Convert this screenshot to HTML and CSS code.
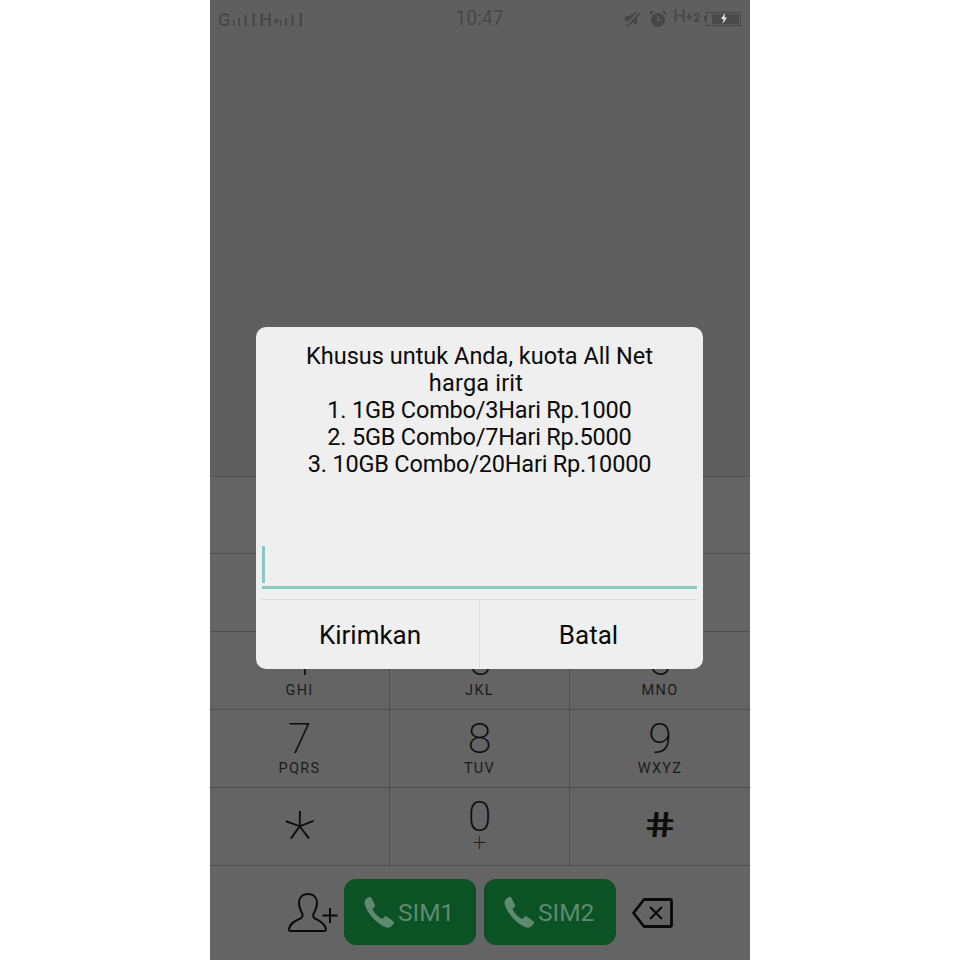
FILE: index.html
```html
<!DOCTYPE html>
<html lang="id">
<head>
<meta charset="utf-8">
<title>Dialer</title>
<link rel="stylesheet" href="styles.css">
</head>
<body>
<div class="phone">
  <div class="status">
    <div class="status-left">
      <span class="net">G</span>
      <svg class="bars first" width="24" height="14" viewBox="0 0 24 14"><rect x="1" y="7" width="1.500" height="6"/><rect x="6" y="5" width="2" height="8"/><rect x="12.500" y="2" width="2" height="11"/><rect x="20.500" y="0" width="2.500" height="13"/></svg>
      <span class="net net-h">H</span><span class="net-plus">+</span>
      <svg class="bars second" width="24" height="14" viewBox="0 0 24 14"><rect x="1" y="7" width="1.500" height="6"/><rect x="6" y="5" width="2" height="8"/><rect x="12.500" y="2" width="2" height="11"/><rect x="20.500" y="0" width="2.500" height="13"/></svg>
    </div>
    <div class="time">10:47</div>
    <div class="status-right">
      <svg width="18" height="17" viewBox="0 0 18 17"><path d="M2 6h4l8-5v14l-8-4H2z" fill="#474747"/><path d="M1 17L17 1" stroke="#5f5f5f" stroke-width="2"/><path d="M4 17L17 3" stroke="#474747" stroke-width="1.600"/></svg>
      <svg class="alarm" width="18" height="18" viewBox="0 0 18 18"><circle cx="9" cy="10" r="7" fill="#474747"/><path d="M9 6v4.500h3.500" stroke="#666" stroke-width="1.200" fill="none"/><path d="M1 4l3-3M17 4l-3-3" stroke="#474747" stroke-width="2"/></svg>
      <span class="hplus"><span class="hplus-h">H</span><span class="hplus-n">+2</span></span>
      <span class="batt-tip"></span>
      <span class="battery"><span class="batt-fill"><svg width="8" height="11" viewBox="0 0 8 11"><path d="M5 0L1 6h2.500L2.500 11 7 4.500H4.500z" fill="#e8e8e8"/></svg></span></span>
    </div>
  </div>
  <div class="blank"></div>
  <div class="keypad">
    <div class="entry"></div>
    <div class="key"><span class="digit">1</span><span class="letters">&nbsp;</span></div>
    <div class="key"><span class="digit">2</span><span class="letters">ABC</span></div>
    <div class="key"><span class="digit">3</span><span class="letters">DEF</span></div>
    <div class="key"><span class="digit">4</span><span class="letters">GHI</span></div>
    <div class="key"><span class="digit">5</span><span class="letters">JKL</span></div>
    <div class="key"><span class="digit">6</span><span class="letters">MNO</span></div>
    <div class="key"><span class="digit">7</span><span class="letters">PQRS</span></div>
    <div class="key"><span class="digit">8</span><span class="letters">TUV</span></div>
    <div class="key"><span class="digit">9</span><span class="letters">WXYZ</span></div>
    <div class="key"><span class="digit symbol">*</span></div>
    <div class="key"><span class="digit">0</span><span class="letters plus">+</span></div>
    <div class="key"><span class="digit hash">#</span></div>
  </div>
  <div class="actions">
    <svg class="add" width="50" height="40" viewBox="0 0 50 40">
      <path d="M20 2C14 2 11 6 11 11 11 15 12.500 18 14 21 15 23 14.500 25.500 12.500 26.500 8 28.500 2 31 1 37 .8 38.500 1.500 39 3 39H36C37.500 39 38 38.500 37.800 37 37 31 31 28.500 27 26.500 25 25.500 24.500 23 26 21 27.500 18 29 15 29 11 29 6 26 2 20 2Z" fill="none" stroke="#0a0a0a" stroke-width="2"/>
      <path d="M42 16v15M34.500 23.500h15" stroke="#0a0a0a" stroke-width="2"/>
    </svg>
    <div class="sim">
      <svg width="32" height="32" viewBox="0 0 32 32"><path d="M3 3L6 1C7 .5 8 1 8.500 2L12 9C12.300 10 12 11 11 11.500L9.500 12.500C11 17 15 21 19.500 23L21 21C21.800 20.200 22.800 20 23.800 20.600L30.500 25.500C31.300 26.200 31.300 27.300 30.500 28L28 30.500C26.500 32 24 32 22 31 13 27 4.500 17.500 2 9 1.300 6.500 1.500 4.500 3 3Z" fill="#5f8a70"/></svg>
      <span>SIM1</span>
    </div>
    <div class="sim">
      <svg width="32" height="32" viewBox="0 0 32 32"><path d="M3 3L6 1C7 .5 8 1 8.500 2L12 9C12.300 10 12 11 11 11.500L9.500 12.500C11 17 15 21 19.500 23L21 21C21.800 20.200 22.800 20 23.800 20.600L30.500 25.500C31.300 26.200 31.300 27.300 30.500 28L28 30.500C26.500 32 24 32 22 31 13 27 4.500 17.500 2 9 1.300 6.500 1.500 4.500 3 3Z" fill="#5f8a70"/></svg>
      <span>SIM2</span>
    </div>
    <svg class="back" width="41" height="30" viewBox="0 0 41 30">
      <path d="M12 1.500h26c1 0 1.500 .5 1.500 1.500v24c0 1-.5 1.500-1.500 1.500H12L1.500 15z" fill="none" stroke="#0a0a0a" stroke-width="2.800" stroke-linejoin="round"/>
      <path d="M18 9l12 12M30 9L18 21" stroke="#0a0a0a" stroke-width="2"/>
    </svg>
  </div>
  <div class="dialog">
    <div class="message">Khusus untuk Anda, kuota All Net<br><span class="wide">harga irit</span><br><span class="tight">1. 1GB Combo/3Hari Rp.1000</span><br><span class="tight">2. 5GB Combo/7Hari Rp.5000</span><br><span class="tight">3. 10GB Combo/20Hari Rp.10000</span></div>
    <div class="input"><span class="caret"></span></div>
    <div class="buttons">
      <div class="btn">Kirimkan</div>
      <div class="btn">Batal</div>
    </div>
  </div>
</div>
</body>
</html>
```
FILE: styles.css
```css
* { box-sizing: border-box; }
html, body { margin: 0; padding: 0; background: #fff; }
body { display: flex; justify-content: center; font-family: Roboto, "Liberation Sans", sans-serif; }
.phone {
  position: relative;
  width: 540px;
  height: 960px;
  background: #5f5f5f;
  display: flex;
  flex-direction: column;
  overflow: hidden;
}
.status {
  height: 36px;
  flex: none;
  display: grid;
  grid-template-columns: 1fr auto 1fr;
  align-items: center;
  padding: 0 9px 0 8px;
  color: #474747;
}
.status-left { display: flex; align-items: center; padding-top: 2px; }
.status-left .bars { fill: #474747; }
.status-left .first { margin-left: 2px; }
.status-left .second { margin-left: -1px; }
.net { font-size: 18px; line-height: 20px; font-weight: 500; }
.net-h { margin-left: 3px; }
.net-plus { font-size: 12px; font-weight: 700; margin: 4px 0 0 1px; }
.time { font-size: 19.500px; line-height: 36px; padding-top: 1px; }
.status-right { display: flex; align-items: center; justify-content: flex-end; }
.alarm { margin-left: 8px; }
.hplus { display: flex; align-items: flex-start; margin: -2px 0 0 6px; height: 24px; width: 24px; }
.hplus-h { font-size: 18px; line-height: 20px; }
.hplus-n { font-size: 13px; font-weight: 700; line-height: 24px; }
.batt-tip { width: 2px; height: 5px; background: #474747; margin-left: 7px; }
.battery {
  width: 35px;
  height: 14px;
  border: 1px solid #474747;
  padding: 1px;
  display: flex;
}
.batt-fill { width: 27px; background: #4a4a4a; display: flex; align-items: center; justify-content: center; padding-right: 4px; margin-left: 4px; }
.blank { height: 440px; flex: none; }
.keypad {
  flex: none;
  display: grid;
  grid-template-columns: repeat(3, 1fr);
  grid-template-rows: 77px repeat(4, 78px);
  background: #646464;
  border-top: 1px solid #4f4f4f;
  height: 390px;
}
.entry { grid-column: 1 / -1; border-bottom: 1px solid #4f4f4f; }
.key {
  display: flex;
  flex-direction: column;
  align-items: center;
  padding-top: 5px;
  border-bottom: 1px solid #4f4f4f;
  border-right: 1px solid #4f4f4f;
  color: #0c0c0c;
}
.key:nth-child(3n+1) { border-right: 0; }
.digit { font-size: 43px; font-weight: 200; line-height: 46px; height: 46px; }
.letters { font-size: 14.500px; line-height: 16px; letter-spacing: 1.300px; color: #1c1c1c; font-weight: 400; }
.plus { font-size: 24px; font-weight: 200; line-height: 14px; letter-spacing: 0; margin-top: -3px; }
.symbol { font-size: 72px; line-height: 92px; height: 64px; font-weight: 250; }
.hash {
  display: block;
  font-size: 35px;
  font-weight: 500;
  line-height: 66px;
  height: 66px;
  transform: skewX(10deg) scaleX(1.450);
}
.actions {
  flex: 1;
  background: #646464;
  display: flex;
  align-items: center;
  padding-left: 78px;
  padding-bottom: 2px;
}
.add { margin-right: 6px; }
.sim {
  width: 132px;
  height: 66px;
  border-radius: 12px;
  background: #0b5224;
  margin-right: 8px;
  display: flex;
  align-items: center;
  padding-left: 19px;
  color: #5f8a70;
  font-size: 24.500px;
  gap: 3px;
}
.back { margin: 2px 0 0 8px; }
.dialog {
  position: absolute;
  left: 46px;
  top: 327px;
  width: 447px;
  height: 342px;
  background: #efefef;
  border-radius: 10px;
  display: flex;
  flex-direction: column;
  color: #0a0a0a;
}
.message {
  flex: 1;
  padding-top: 16px;
  text-align: center;
  font-size: 23.500px;
  line-height: 27px;
}
.tight { letter-spacing: -0.200px; }
.wide { letter-spacing: 0.200px; padding-right: 7px; }
.input {
  flex: none;
  height: 43px;
  margin: 0 6px;
  border-bottom: 3px solid #88cabf;
}
.caret { display: block; width: 3px; height: 37px; background: #88cabf; }
.buttons {
  flex: none;
  height: 70px;
  margin: 10px 6px 0 5px;
  border-top: 1px solid #dcdcdc;
  display: grid;
  grid-template-columns: 219px 1fr;
}
.btn {
  display: flex;
  align-items: center;
  justify-content: center;
  font-size: 26px;
}
.btn:first-child { border-right: 1px solid #dcdcdc; }
```
